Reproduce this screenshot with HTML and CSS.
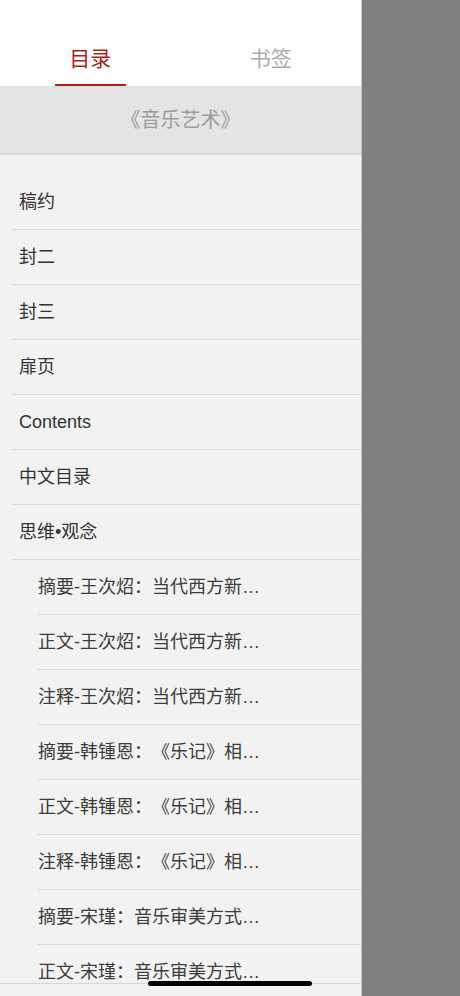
FILE: index.html
```html
<!DOCTYPE html>
<html lang="zh-CN">
<head>
  <meta charset="UTF-8" />
  <title>目录</title>
  <link rel="stylesheet" href="styles.css">
</head>
<body>
  <div class="drawer">
    <div class="tabs">
      <div class="tab active"><span>目录</span></div>
      <div class="tab"><span>书签</span></div>
    </div>
    <div class="book-title">《音乐艺术》</div>
    <ul class="toc">
      <li class="toc-item">稿约</li>
      <li class="toc-item">封二</li>
      <li class="toc-item">封三</li>
      <li class="toc-item">扉页</li>
      <li class="toc-item">Contents</li>
      <li class="toc-item">中文目录</li>
      <li class="toc-item">思维•观念</li>
      <li class="toc-item sub">摘要-王次炤：当代西方新…</li>
      <li class="toc-item sub">正文-王次炤：当代西方新…</li>
      <li class="toc-item sub">注释-王次炤：当代西方新…</li>
      <li class="toc-item sub">摘要-韩锺恩：《乐记》相…</li>
      <li class="toc-item sub">正文-韩锺恩：《乐记》相…</li>
      <li class="toc-item sub">注释-韩锺恩：《乐记》相…</li>
      <li class="toc-item sub">摘要-宋瑾：音乐审美方式…</li>
      <li class="toc-item sub">正文-宋瑾：音乐审美方式…</li>
      <li class="toc-item sub">注释-宋瑾：音乐审美方式…</li>
    </ul>
    <div class="drawer-foot"></div>
  </div>
  <div class="backdrop"></div>
  <div class="home-bar"></div>
</body>
</html>
```

FILE: styles.css
```css
body {
  margin: 0;
  height: 996px;
  display: flex;
  overflow: hidden;
  font-family: "Liberation Sans", "Noto Sans CJK SC", sans-serif;
  text-spacing-trim: space-all;
  background-color: #808080;
}

.drawer {
  width: 361px;
  border-right: 1px solid #c8c8c8;
  display: flex;
  flex-direction: column;
  background-color: #f2f2f2;
}

/* top tabs */
.tabs {
  height: 86px;
  display: flex;
  background-color: #fff;
}

.tab {
  flex: 1;
  display: flex;
  justify-content: center;
  align-items: flex-end;
  font-size: 21px;
  color: #aaaaaa;
}

.tab span {
  display: block;
  width: 71px;
  text-align: center;
  padding-bottom: 12px;
  border-bottom: 2px solid transparent;
}

.tab.active span {
  color: #ad1f1a;
  border-bottom-color: #ad1f1a;
}

.book-title {
  height: 67px;
  line-height: 69px;
  text-align: center;
  font-size: 20px;
  color: #9c9c9c;
  background-color: #e4e4e4;
  border-bottom: 2px solid #d6d6d6;
}

/* chapter list */
.toc {
  flex: 1;
  list-style: none;
  margin: 0;
  padding: 20px 0 0;
  overflow: hidden;
}

.toc-item {
  height: 54px;
  line-height: 54px;
  margin-left: 12px;
  padding-left: 7px;
  border-bottom: 1px solid #dadada;
  font-size: 18px;
  color: #333;
  white-space: nowrap;
}

.toc-item.sub {
  margin-left: 38px;
  padding-left: 0;
  color: #3c3c3c;
}

.drawer-foot {
  height: 12px;
  border-top: 1px solid #d6d6d6;
}

.backdrop {
  flex: 1;
}

.home-bar {
  position: absolute;
  left: 148px;
  bottom: 10px;
  width: 164px;
  height: 5px;
  border-radius: 3px;
  background-color: #000;
}
```
